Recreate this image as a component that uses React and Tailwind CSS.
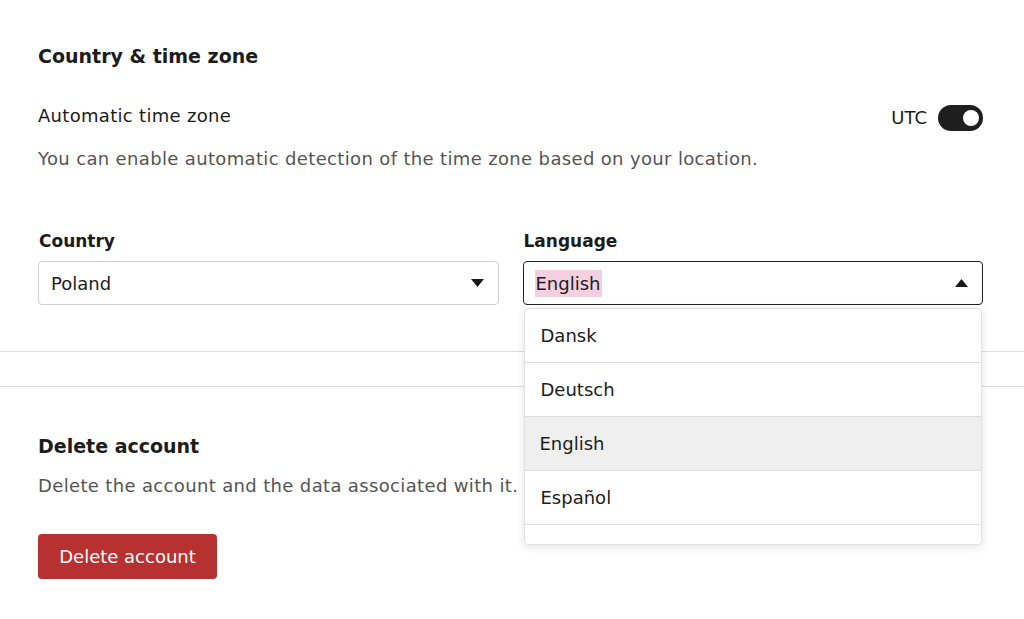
import React from "react";

const font = { fontFamily: "'DejaVu Sans', 'Noto Sans', sans-serif" };

function Caret({ up }) {
  return (
    <svg width="13" height="8" viewBox="0 0 13 8" className="shrink-0">
      {up ? <path d="M0 8 L6.5 0 L13 8 Z" fill="#1a1a1a" /> : <path d="M0 0 L13 0 L6.5 8 Z" fill="#1a1a1a" />}
    </svg>
  );
}

export default function App() {
  const items = ["Dansk", "Deutsch", "English", "Español", "Français"];
  return (
    <div className="w-[1024px] h-[619px] bg-white overflow-hidden text-[#1c1c1c]" style={font}>
      <div className="px-[38px] pt-[42px]">
        <h2 className="text-[19px] font-bold leading-[28px]">Country &amp; time zone</h2>
        <div className="mt-[32px] flex items-start justify-between">
          <div className="text-[18px] tracking-[0.3px] leading-[24px] pt-[2px]">Automatic time zone</div>
          <div className="flex items-center gap-[11px] pr-[3px] pt-[3px]">
            <span className="text-[18px] leading-[26px]">UTC</span>
            <div className="w-[45px] h-[26px] rounded-full bg-[#1f1f1f] flex items-center justify-end pr-[4px]">
              <div className="w-[16px] h-[16px] rounded-full bg-white" />
            </div>
          </div>
        </div>
        <p className="mt-[16px] text-[18px] tracking-[0.35px] leading-[24px] text-[#555]">
          You can enable automatic detection of the time zone based on your location.
        </p>
        <div className="mt-[58px] grid grid-cols-2 gap-x-[24px] pr-[3px]">
          <div>
            <div className="text-[17px] font-bold leading-[24px] pl-[1px]">Country</div>
            <div className="mt-[8px] h-[44px] rounded-[4px] border border-[#cfcfcf] flex items-center justify-between pl-[12px] pr-[14px]">
              <span className="text-[18px]">Poland</span>
              <Caret />
            </div>
          </div>
          <div className="relative">
            <div className="text-[17px] font-bold leading-[24px] pl-[1px]">Language</div>
            <div className="mt-[8px] h-[44px] rounded-[4px] border border-[#222] flex items-center justify-between pl-[11px] pr-[14px]">
              <span className="text-[18px] bg-[#f3cfe0] px-[1px]">English</span>
              <Caret up />
            </div>
            <div className="absolute left-[1px] right-[1px] top-[79px] h-[237px] overflow-hidden rounded-[4px] bg-white border border-[#e2e2e2] shadow-[0_2px_8px_rgba(0,0,0,0.12)] z-10">
              {items.map((it) => (
                <div
                  key={it}
                  className={`h-[54px] flex items-center border-b border-[#dedede] text-[18px] ${it === "English" ? "bg-[#efefef] pl-[15px]" : "pl-[16px]"}`}
                >
                  {it}
                </div>
              ))}
            </div>
          </div>
        </div>
      </div>
      <div className="mt-[46px] border-t border-[#dcdcdc]" />
      <div className="h-[34px]" />
      <div className="border-t border-[#dcdcdc]" />
      <div className="px-[38px] pt-[45px]">
        <h2 className="text-[19px] font-bold leading-[28px]">Delete account</h2>
        <p className="mt-[14px] text-[18px] tracking-[0.35px] leading-[24px] text-[#555]">Delete the account and the data associated with it.</p>
        <button className="mt-[36px] w-[179px] h-[45px] rounded-[4px] bg-[#b73131] text-white text-[18px]">
          Delete account
        </button>
      </div>
    </div>
  );
}
